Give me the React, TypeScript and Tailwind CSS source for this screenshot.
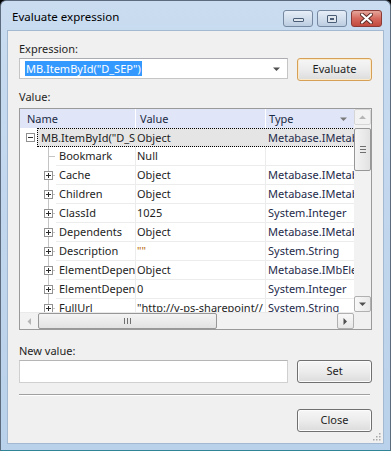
import React from "react";

const FONT = "font-['Noto_Sans',sans-serif]";

function Box({ minus }: { minus?: boolean }) {
  return (
    <svg width="9" height="9" viewBox="0 0 9 9" className="block">
      <rect x="0.5" y="0.5" width="8" height="8" fill="#fff" stroke="#919191" />
      <line x1="2" y1="4.5" x2="7" y2="4.5" stroke="#2b2b2b" />
      {!minus && <line x1="4.5" y1="2" x2="4.5" y2="7" stroke="#2b2b2b" />}
    </svg>
  );
}

function TreeGlyph({ leaf }: { leaf?: boolean }) {
  return (
    <svg width="15" height="19" viewBox="0 0 15 19" className="block shrink-0">
      <line x1="7.5" y1="0" x2="7.5" y2="19" stroke="#c4c4c4" />
      <line x1="7.5" y1="9.5" x2="14" y2="9.5" stroke="#c4c4c4" />
      {!leaf && (
        <g transform="translate(3,5)">
          <rect x="0.5" y="0.5" width="8" height="8" fill="#fff" stroke="#919191" />
          <line x1="2" y1="4.5" x2="7" y2="4.5" stroke="#2b2b2b" />
          <line x1="4.5" y1="2" x2="4.5" y2="7" stroke="#2b2b2b" />
        </g>
      )}
    </svg>
  );
}

type Row = { name: string; value: string; type: string; leaf?: boolean; quote?: boolean };

const rows: Row[] = [
  { name: "Bookmark", value: "Null", type: "", leaf: true },
  { name: "Cache", value: "Object", type: "Metabase.IMetabaseCache" },
  { name: "Children", value: "Object", type: "Metabase.IMetabaseObjectDescriptors" },
  { name: "ClassId", value: "1025", type: "System.Integer" },
  { name: "Dependents", value: "Object", type: "Metabase.IMetabaseDependents" },
  { name: "Description", value: '""', type: "System.String", quote: true },
  { name: "ElementDependents", value: "Object", type: "Metabase.IMbElementDependents" },
  { name: "ElementDependentsCount", value: "0", type: "System.Integer" },
  { name: "FullUrl", value: '"http://v-ps-sharepoint//', type: "System.String" },
];

function Button({ label, def }: { label: string; def?: boolean }) {
  return (
    <div
      className={`w-[75px] h-[23px] rounded-[3px] border flex items-center justify-center text-[11px] text-[#1e1e1e] bg-gradient-to-b from-[#f6f6f6] via-[#ececec] to-[#dcdcdc] ${
        def ? "border-[#d6a157] shadow-[inset_0_0_0_1px_#fbe9c8]" : "border-[#707070] shadow-[inset_0_0_0_1px_#fcfcfc]"
      }`}
    >
      {label}
    </div>
  );
}

function Arrow({ dir, color = "#606060" }: { dir: "up" | "down" | "left" | "right"; color?: string }) {
  const pts: Record<string, string> = {
    up: "0,4 3.5,0.5 7,4",
    down: "0,0.5 7,0.5 3.5,4",
    left: "4,0 4,7 0.5,3.5",
    right: "0.5,0 0.5,7 4,3.5",
  };
  const vertical = dir === "up" || dir === "down";
  return (
    <svg width={vertical ? 7 : 5} height={vertical ? 5 : 7} viewBox={vertical ? "0 0 7 5" : "0 0 5 7"}>
      <polygon points={pts[dir]} fill={color} />
    </svg>
  );
}

export default function App() {
  return (
    <div className={`w-[391px] h-[451px] bg-black ${FONT}`}>
      <div className="w-[391px] h-[451px] rounded-t-[6px] border border-[#5c6b7d] border-b-[#2f8496] bg-gradient-to-b from-[#c9dcf0] to-[#b9d1ea] flex flex-col">
        {/* title bar */}
        <div className="h-[29px] flex items-start">
          <div className="pl-[11px] pt-[8px] text-[11.5px] text-black leading-[16px]">Evaluate expression</div>
          <div className="ml-auto mr-[8px] mt-[9px] flex gap-[4px]">
            <div className="w-[30px] h-[17px] rounded-[3px] border border-[#7688a0] bg-gradient-to-b from-[#e6eef8] via-[#d2deec] to-[#bccde2] flex items-center justify-center">
              <div className="w-[11px] h-[4px] border border-[#4a5d76] bg-[#dfe6ee] rounded-[1px] mt-[3px]" />
            </div>
            <div className="w-[30px] h-[17px] rounded-[3px] border border-[#7688a0] bg-gradient-to-b from-[#e6eef8] via-[#d2deec] to-[#bccde2] flex items-center justify-center">
              <div className="w-[10px] h-[8px] border border-[#4a5d76] bg-[#dfe6ee] flex items-center justify-center rounded-[1px]">
                <div className="w-[4px] h-[2px] border border-[#4a5d76]" />
              </div>
            </div>
            <div className="w-[31px] h-[17px] rounded-[3px] border border-[#8c3a35] bg-gradient-to-b from-[#e5a59b] via-[#d5695e] to-[#c24a3e] flex items-center justify-center">
              <svg width="13" height="11" viewBox="0 0 13 11">
                <path d="M2 1.5 L11 9.5 M11 1.5 L2 9.5" stroke="#5a2a26" strokeWidth="4" strokeLinecap="round" />
                <path d="M2 1.5 L11 9.5 M11 1.5 L2 9.5" stroke="#ffffff" strokeWidth="2.2" strokeLinecap="round" />
              </svg>
            </div>
          </div>
        </div>

        {/* content */}
        <div className="mx-[6px] h-[414px] border border-[#a3b9d2] bg-[#f0f0f0] px-[11px] flex flex-col text-[#1e1e1e] text-[11px] relative">
          <div className="mt-[10px] h-[15px] leading-[15px]">Expression:</div>
          <div className="mt-[2px] flex items-start">
            <div className="w-[269px] h-[21px] bg-white border border-[#c5c5c5] border-t-[#abadb3] flex items-center pl-[5px]">
              <span className="bg-[#3399ff] text-white leading-[15px] h-[15px] px-[1px]">MB.ItemById("D_SEP")</span>
              <div className="ml-auto mr-[7px] mt-[1px]">
                <Arrow dir="down" color="#505050" />
              </div>
            </div>
            <div className="ml-auto">
              <Button label="Evaluate" def />
            </div>
          </div>

          <div className="mt-[8px] h-[15px] leading-[15px]">Value:</div>

          {/* grid */}
          <div className="mt-[4px] h-[222px] w-[353px] border border-[#9a9a9a] bg-white flex">
            <div className="w-[334px] flex flex-col">
              {/* header */}
              <div className="h-[19px] flex bg-[#e0e5f7] text-[#1b2a44]">
                <div className="w-[116px] border-r border-white pl-[7px] leading-[19px]">Name</div>
                <div className="w-[130px] border-r border-white pl-[4px] leading-[19px]">Value</div>
                <div className="flex-1 pl-[3px] leading-[19px] flex items-center">
                  <span>Type</span>
                  <div className="ml-auto mr-[7px] mt-[1px]">
                    <Arrow dir="down" color="#7a7a7a" />
                  </div>
                </div>
              </div>
              {/* body */}
              <div className="h-[184px] overflow-hidden">
                {/* root row */}
                <div className="h-[19px] flex">
                  <div className="w-[17px] shrink-0 flex items-center pl-[6px]">
                    <Box minus />
                  </div>
                  <div className="flex-1 flex bg-[#e5e5e5] border border-dotted border-black">
                    <div className="w-[98px] shrink-0 overflow-hidden whitespace-nowrap pl-[3px] leading-[17px]">MB.ItemById("D_SEP")</div>
                    <div className="w-[130px] shrink-0 overflow-hidden whitespace-nowrap pl-[1px] leading-[17px]">Object</div>
                    <div className="flex-1 overflow-hidden whitespace-nowrap pl-[2px] leading-[17px] text-[#1e2a4a]">Metabase.IMetabaseObject</div>
                  </div>
                </div>
                {rows.map((r) => (
                  <div key={r.name} className="h-[19px] flex">
                    <div className="w-[116px] shrink-0 flex overflow-hidden whitespace-nowrap">
                      <div className="w-[21px] shrink-0" />
                      <TreeGlyph leaf={r.leaf} />
                      <div className="flex-1 overflow-hidden border-b border-r border-[#ececec] pl-[3px] leading-[18px]">{r.name}</div>
                    </div>
                    <div className={`w-[130px] shrink-0 overflow-hidden whitespace-nowrap border-b border-r border-[#ececec] pl-[1px] leading-[18px] ${r.quote ? "text-[#b86b10]" : ""}`}>
                      {r.value}
                    </div>
                    <div className="flex-1 overflow-hidden whitespace-nowrap border-b border-[#ececec] pl-[2px] leading-[18px] text-[#1e2a4a]">{r.type}</div>
                  </div>
                ))}
              </div>
              {/* horizontal scrollbar */}
              <div className="h-[17px] bg-[#f2f2f2] flex items-stretch border-t border-[#eaeaea]">
                <div className="w-[18px] flex items-center justify-center">
                  <Arrow dir="left" color="#b5b5b5" />
                </div>
                <div className="w-[179px] rounded-[2px] border border-[#979797] bg-gradient-to-b from-[#f4f4f4] to-[#e2e2e2] flex items-center justify-center gap-[2px]">
                  <div className="w-px h-[6px] bg-[#6f6f6f]" />
                  <div className="w-px h-[6px] bg-[#6f6f6f]" />
                  <div className="w-px h-[6px] bg-[#6f6f6f]" />
                </div>
                <div className="flex-1" />
                <div className="w-[17px] rounded-[2px] border border-[#b0b0b0] bg-gradient-to-b from-[#f8f8f8] to-[#e8e8e8] flex items-center justify-center">
                  <Arrow dir="right" color="#505050" />
                </div>
              </div>
            </div>
            {/* vertical scrollbar */}
            <div className="w-[17px] flex flex-col bg-[#f2f2f2]">
              <div className="h-[16px] rounded-[2px] border border-[#d6d6d6] flex items-center justify-center">
                <Arrow dir="up" color="#b5b5b5" />
              </div>
              <div className="mt-[3px] h-[43px] rounded-[2px] border border-[#979797] bg-gradient-to-r from-[#f4f4f4] to-[#e2e2e2] flex flex-col items-center justify-center gap-[2px]">
                <div className="w-[6px] h-px bg-[#6f6f6f]" />
                <div className="w-[6px] h-px bg-[#6f6f6f]" />
                <div className="w-[6px] h-px bg-[#6f6f6f]" />
              </div>
              <div className="flex-1" />
              <div className="h-[16px] rounded-[2px] border border-[#b0b0b0] bg-gradient-to-r from-[#f8f8f8] to-[#e8e8e8] flex items-center justify-center">
                <Arrow dir="down" color="#505050" />
              </div>
              <div className="h-[17px] bg-[#f0f0f0]" />
            </div>
          </div>

          <div className="mt-[13px] h-[15px] leading-[15px]">New value:</div>
          <div className="mt-[2px] flex items-start">
            <div className="w-[269px] h-[23px] bg-white border border-[#d0d0d0] border-t-[#b5b5b5]" />
            <div className="ml-auto">
              <Button label="Set" />
            </div>
          </div>

          <div className="mt-[11px] w-[351px] h-[2px] border-t border-[#a0a0a0] border-b border-b-white" />

          <div className="mt-[13px] flex">
            <div className="ml-auto">
              <Button label="Close" />
            </div>
          </div>

          {/* resize grip */}
          <svg width="8" height="8" viewBox="0 0 8 8" className="absolute right-[2px] bottom-[2px]">
            {[
              [6, 0],
              [6, 3],
              [3, 3],
              [6, 6],
              [3, 6],
              [0, 6],
            ].map(([x, y], i) => (
              <rect key={i} x={x} y={y} width="1.5" height="1.5" fill="#a8a8a8" />
            ))}
          </svg>
        </div>
      </div>
    </div>
  );
}
